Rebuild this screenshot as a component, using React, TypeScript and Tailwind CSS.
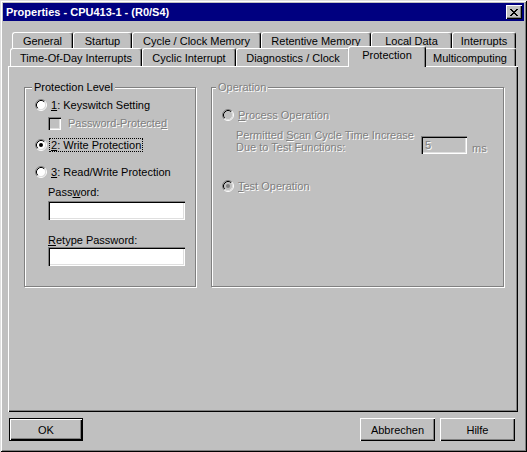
import React from 'react';

const font = "font-['Liberation_Sans',Arial,sans-serif]";
const raised = 'shadow-[inset_1px_1px_#fff,inset_-1px_-1px_#000,inset_-2px_-2px_#808080]';
const sunken = 'shadow-[inset_1px_1px_#808080,inset_2px_2px_#000,inset_-1px_-1px_#fff,inset_-2px_-2px_#dfdfdf]';
const dim = 'text-[#808080] [text-shadow:1px_1px_0_#fff]';

function Radio({ checked, disabled }: { checked?: boolean; disabled?: boolean }) {
  return (
    <svg width="12" height="12" viewBox="0 0 12 12" className="shrink-0">
      <circle cx="6" cy="6" r="4.5" fill={disabled ? '#c0c0c0' : '#fff'} />
      <path d="M2.11 9.89A5.5 5.5 0 0 1 9.89 2.11" stroke="#808080" fill="none" />
      <path d="M9.89 2.11A5.5 5.5 0 0 1 2.11 9.89" stroke="#fff" fill="none" />
      <path d="M2.82 9.18A4.5 4.5 0 0 1 9.18 2.82" stroke="#000" fill="none" />
      <path d="M9.18 2.82A4.5 4.5 0 0 1 2.82 9.18" stroke="#dfdfdf" fill="none" />
      {checked && <circle cx="6" cy="6" r="2" fill={disabled ? '#808080' : '#000'} />}
    </svg>
  );
}

function Tab({ label, w, selected }: { label: string; w: string; selected?: boolean }) {
  return (
    <div
      className={
        'flex items-center justify-center whitespace-nowrap bg-[#c0c0c0] border-l border-t border-white border-r border-r-black rounded-t-[3px] shadow-[inset_-1px_0_#808080] ' +
        w +
        (selected ? ' relative z-10 top-px h-[21px] -mx-[2px] pb-[4px]' : ' h-full')
      }
    >
      {label}
    </div>
  );
}

function Closex() {
  const rows = ['11000011', '01100110', '00111100', '00011000', '00111100', '01100110', '11000011'];
  return (
    <svg width="8" height="7" viewBox="0 0 8 7">
      {rows.map((r, y) =>
        r.split('').map((c, x) => (c === '1' ? <rect key={y + '-' + x} x={x} y={y} width="1" height="1" fill="#000" /> : null))
      )}
    </svg>
  );
}

export default function App() {
  return (
    <div
      className={
        'w-[527px] h-[452px] bg-[#c0c0c0] p-[3px] flex flex-col text-[11px] text-black leading-[14px] select-none shadow-[inset_1px_1px_#dfdfdf,inset_-1px_-1px_#000,inset_2px_2px_#fff,inset_-2px_-2px_#808080] ' +
        font
      }
    >
      <div className="h-[18px] bg-[#000080] flex items-center justify-between pl-[3px] pr-[2px]">
        <span className="text-white font-bold">Properties - CPU413-1 - (R0/S4)</span>
        <button className={'w-[16px] h-[14px] bg-[#c0c0c0] flex items-center justify-center ' + raised}>
          <Closex />
        </button>
      </div>

      <div className="flex flex-col px-[5px] mt-[11px]">
        <div className="flex h-[16px] ml-[4px]">
          <Tab label="General" w="w-[61px]" />
          <Tab label="Startup" w="w-[59px]" />
          <Tab label="Cycle / Clock Memory" w="w-[129px]" />
          <Tab label="Retentive Memory" w="w-[110px]" />
          <Tab label="Local Data" w="w-[81px]" />
          <Tab label="Interrupts" w="w-[64px]" />
        </div>
        <div className="flex h-[18px] ml-[2px] items-end">
          <Tab label="Time-Of-Day Interrupts" w="w-[132px]" />
          <Tab label="Cyclic Interrupt" w="w-[94px]" />
          <Tab label="Diagnostics / Clock" w="w-[114px]" />
          <Tab label="Protection" w="w-[78px]" selected />
          <Tab label="Multicomputing" w="w-[92px]" />
        </div>

        <div className={'w-[510px] h-[346px] pl-[16px] pt-[21px] flex gap-[15px] ' + raised}>
          <div className="relative w-[172px] h-[200px] border border-[#808080] shadow-[inset_1px_1px_#fff,1px_1px_#fff] pl-[10px] pt-[10px] flex flex-col">
            <span className="absolute left-[7px] -top-[8px] px-[2px] bg-[#c0c0c0]">Protection Level</span>
            <div className="flex items-center h-[14px]">
              <Radio />
              <span className="ml-[4px]">
                <u>1</u>: Keyswitch Setting
              </span>
            </div>
            <div className="flex items-center h-[14px] mt-[4px] ml-[13px]">
              <div className={'w-[13px] h-[13px] bg-[#c0c0c0] ' + sunken} />
              <span className={'ml-[7px] ' + dim}>
                Password-Protecte<u>d</u>
              </span>
            </div>
            <div className="flex items-center h-[14px] mt-[8px]">
              <Radio checked />
              <span className="ml-[2px] px-[1px] border border-dotted border-black leading-[12px]">
                <u>2</u>: Write Protection
              </span>
            </div>
            <div className="flex items-center h-[14px] mt-[13px]">
              <Radio />
              <span className="ml-[4px]">
                <u>3</u>: Read/Write Protection
              </span>
            </div>
            <div className="ml-[13px] flex flex-col">
              <span className="h-[14px] mt-[6px]">
                Pass<u>w</u>ord:
              </span>
              <div className={'w-[137px] h-[19px] mt-[2px] bg-white ' + sunken} />
              <span className="h-[14px] mt-[13px]">
                <u>R</u>etype Password:
              </span>
              <div className={'w-[137px] h-[19px] bg-white ' + sunken} />
            </div>
          </div>

          <div className="relative w-[293px] h-[200px] border border-[#808080] shadow-[inset_1px_1px_#fff,1px_1px_#fff] pl-[10px] pt-[20px] flex flex-col">
            <span className={'absolute left-[4px] -top-[8px] px-[2px] bg-[#c0c0c0] ' + dim}>Operation</span>
            <div className="flex items-center h-[14px]">
              <Radio disabled />
              <span className={'ml-[4px] ' + dim}>
                <u>P</u>rocess Operation
              </span>
            </div>
            <div className="flex items-start mt-[7px] ml-[14px]">
              <div className={'w-[185px] leading-[12px] ' + dim}>
                <div>
                  Permitted <u>S</u>can Cycle Time Increase
                </div>
                <div>Due to Test Functions:</div>
              </div>
              <div className={'w-[46px] h-[18px] mt-[7px] bg-[#c0c0c0] pl-[4px] flex items-center ' + sunken}>
                <span className={dim}>5</span>
              </div>
              <span className={'ml-[5px] mt-[13px] leading-[12px] ' + dim}>ms</span>
            </div>
            <div className="flex items-center h-[14px] mt-[25px]">
              <Radio checked disabled />
              <span className={'ml-[4px] ' + dim}>
                <u>T</u>est Operation
              </span>
            </div>
          </div>
        </div>

        <div className="flex mt-[6px] ml-[1px] mr-[4px]">
          <button className={'w-[74px] h-[23px] border border-black ' + raised}>OK</button>
          <div className="flex-1" />
          <button className={'w-[75px] h-[23px] ' + raised}>Abbrechen</button>
          <button className={'w-[75px] h-[23px] ml-[5px] ' + raised}>Hilfe</button>
        </div>
      </div>
    </div>
  );
}
